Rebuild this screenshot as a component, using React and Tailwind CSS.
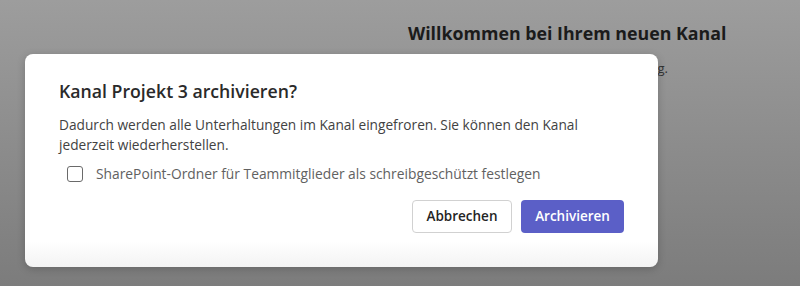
export default function App() {
  return (
    <div
      className="relative h-[286px] w-[800px] overflow-hidden bg-gradient-to-b from-[#9d9d9d] to-[#7c7c7c]"
      style={{ fontFamily: '"Open Sans", "Noto Sans", sans-serif' }}
    >
      <div className="ml-[408px] pt-[21px]">
        <h2 className="text-[17.8px] font-bold leading-[24px] text-[#1b1b1b]">Willkommen bei Ihrem neuen Kanal</h2>
        <p className="mt-[14px] w-[260px] text-right text-[13px] leading-[18px] text-[#333]">Starten Sie eine Unterhaltung.</p>
      </div>

      <div className="absolute left-[25px] top-[54px] h-[213px] w-[633px] rounded-[8px] bg-gradient-to-b from-white from-[88%] to-[#f3f3f3] px-[34px] pt-[25px] shadow-[0_2px_8px_rgba(0,0,0,0.2)]">
        <h1 className="text-[17.7px] font-semibold leading-[24px] text-[#2a2a2a]">Kanal Projekt 3 archivieren?</h1>
        <p className="mt-[12px] text-[13.7px] leading-[20px] text-[#424242]">
          Dadurch werden alle Unterhaltungen im Kanal eingefroren. Sie können den Kanal
          <br />
          jederzeit wiederherstellen.
        </p>
        <label className="mt-[10px] flex items-center gap-[13px] pl-[8px]">
          <span className="h-[16px] w-[16px] rounded-[3px] border border-[#6a6a6a] bg-white" />
          <span className="text-[13.8px] leading-[18px] text-[#616161]">SharePoint-Ordner für Teammitglieder als schreibgeschützt festlegen</span>
        </label>
        <div className="mt-[17px] flex justify-end gap-[9px]">
          <button className="h-[33px] w-[100px] rounded-[4px] border border-[#d1d1d1] bg-white text-[13.5px] font-semibold text-[#242424]">Abbrechen</button>
          <button className="h-[33px] w-[103px] rounded-[4px] bg-[#5b5fc7] text-[13.5px] font-semibold text-white">Archivieren</button>
        </div>
      </div>
    </div>
  );
}
